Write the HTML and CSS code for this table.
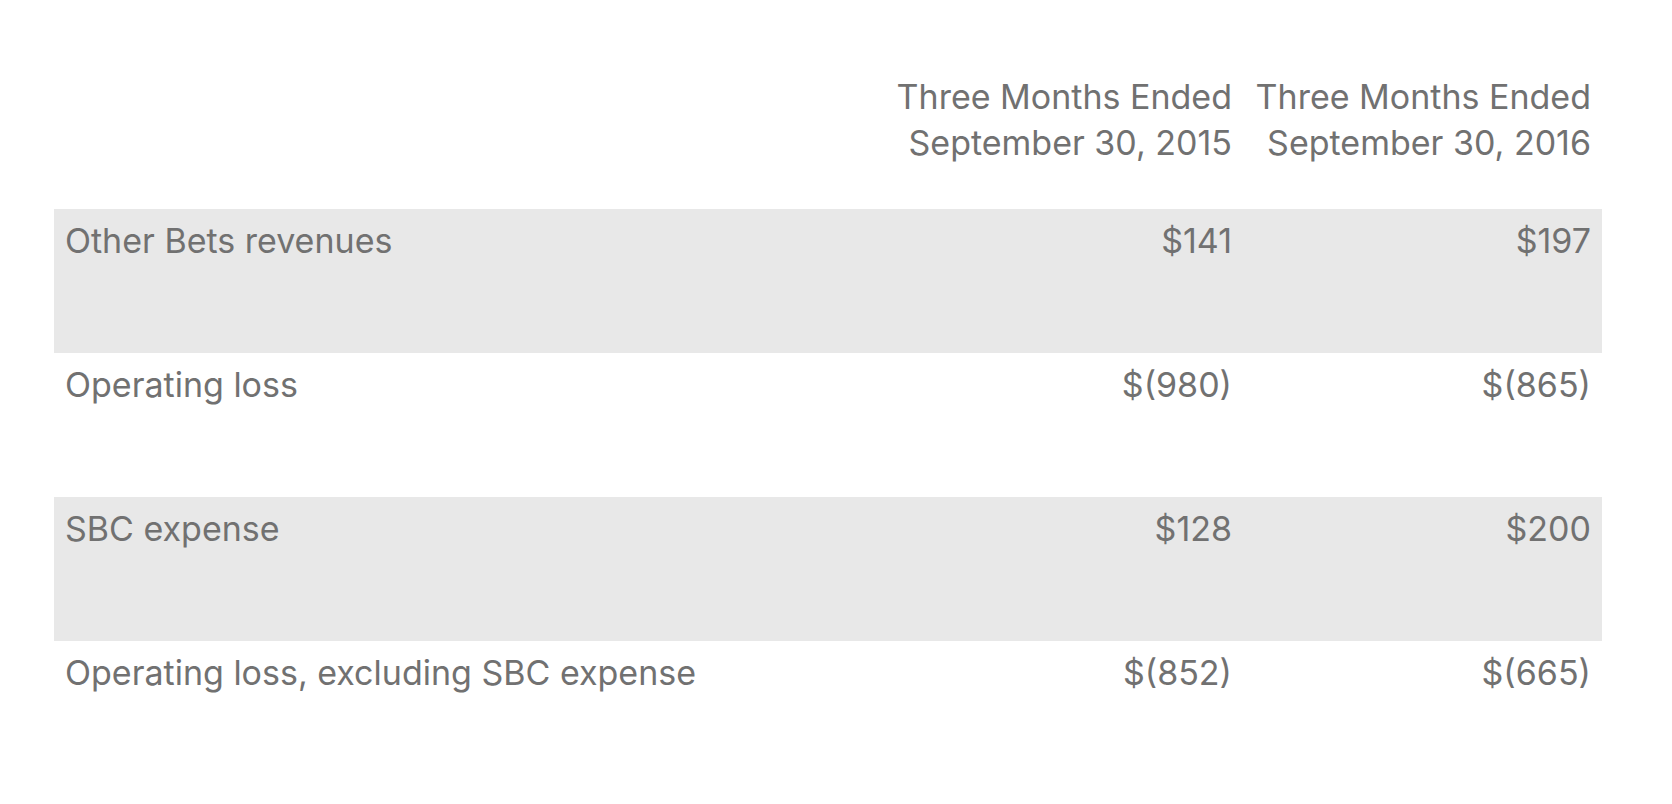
FILE: index.html
```html
<!DOCTYPE html>
<html lang="en">
<head>
<meta charset="utf-8">
<title>Other Bets</title>
<link rel="stylesheet" href="styles.css">
</head>
<body>
<div class="fin-table">
  <div class="fin-row fin-head">
    <div class="cell label"></div>
    <div class="cell num">Three Months Ended<br>September 30, 2015</div>
    <div class="cell num">Three Months Ended<br>September 30, 2016</div>
  </div>
  <div class="fin-row shaded">
    <div class="cell label">Other Bets revenues</div>
    <div class="cell num">$141</div>
    <div class="cell num">$197</div>
  </div>
  <div class="fin-row">
    <div class="cell label">Operating loss</div>
    <div class="cell num">$(980)</div>
    <div class="cell num">$(865)</div>
  </div>
  <div class="fin-row shaded">
    <div class="cell label">SBC expense</div>
    <div class="cell num">$128</div>
    <div class="cell num">$200</div>
  </div>
  <div class="fin-row">
    <div class="cell label">Operating loss, excluding SBC expense</div>
    <div class="cell num">$(852)</div>
    <div class="cell num">$(665)</div>
  </div>
</div>
</body>
</html>
```
FILE: styles.css
```css
html, body {
  margin: 0;
  padding: 0;
  background: #ffffff;
}

body {
  font-family: Inter, "Liberation Sans", sans-serif;
  font-size: 34px;
  line-height: 46px;
  color: #717171;
}

.fin-table {
  margin-left: 54px;
  width: 1548px;
  display: flex;
  flex-direction: column;
}

.fin-row {
  display: grid;
  grid-template-columns: 1fr 338px 338px;
  column-gap: 21px;
  padding: 9px 11px 0 11px;
  height: 144px;
  box-sizing: border-box;
}

.fin-head {
  height: 209px;
  padding-top: 74px;
}

.shaded {
  background: #e8e8e8;
}

.cell {
  white-space: nowrap;
}

.num {
  text-align: right;
}
```
